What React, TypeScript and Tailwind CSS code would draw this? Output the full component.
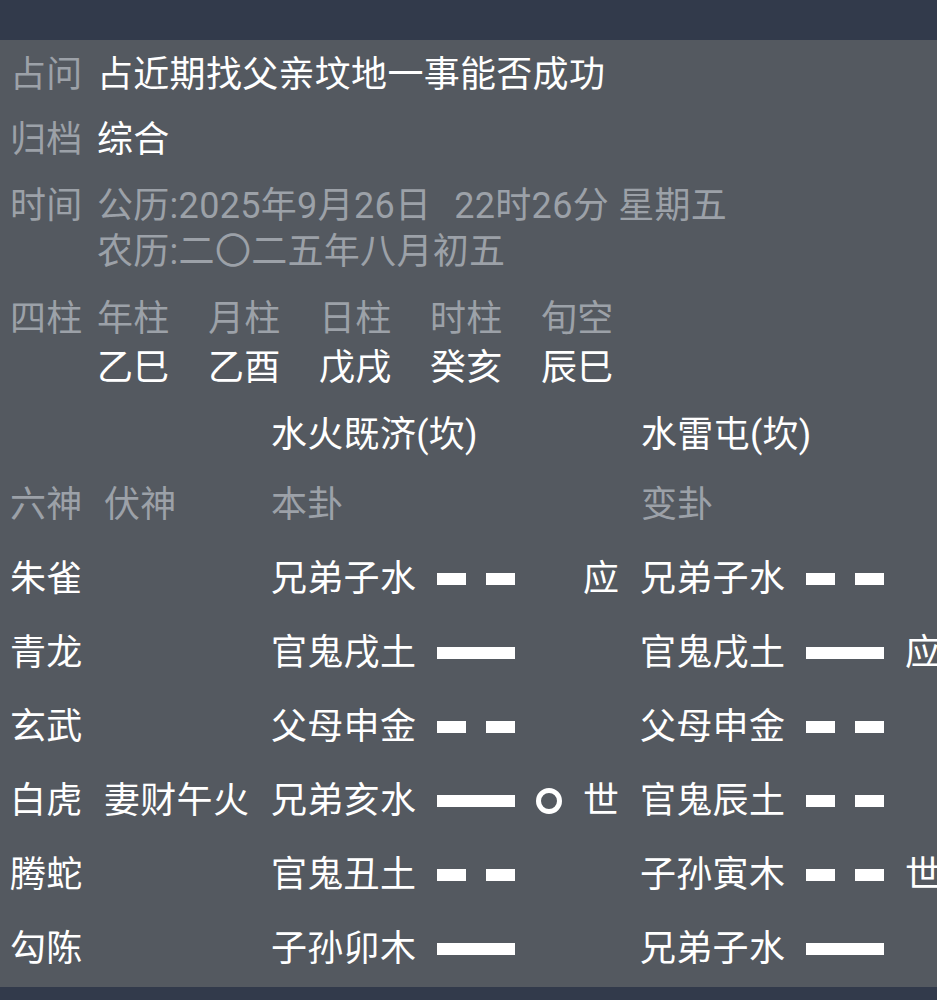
import React from "react";

const FONT = { fontFamily: 'Roboto, "Noto Sans CJK SC", sans-serif' };

function Solid() {
  return <div className="h-[12px] w-[78px] bg-white" />;
}

function Broken() {
  return (
    <div className="flex w-[78px] justify-between">
      <div className="h-[12px] w-[29px] bg-white" />
      <div className="h-[12px] w-[29px] bg-white" />
    </div>
  );
}

type Yao = {
  god: string;
  fu: string;
  ben: string;
  benLine: "s" | "b";
  moving: boolean;
  benMark: string;
  bian: string;
  bianLine: "s" | "b";
  bianMark: string;
};

const rows: Yao[] = [
  { god: "朱雀", fu: "", ben: "兄弟子水", benLine: "b", moving: false, benMark: "应", bian: "兄弟子水", bianLine: "b", bianMark: "" },
  { god: "青龙", fu: "", ben: "官鬼戌土", benLine: "s", moving: false, benMark: "", bian: "官鬼戌土", bianLine: "s", bianMark: "应" },
  { god: "玄武", fu: "", ben: "父母申金", benLine: "b", moving: false, benMark: "", bian: "父母申金", bianLine: "b", bianMark: "" },
  { god: "白虎", fu: "妻财午火", ben: "兄弟亥水", benLine: "s", moving: true, benMark: "世", bian: "官鬼辰土", bianLine: "b", bianMark: "" },
  { god: "腾蛇", fu: "", ben: "官鬼丑土", benLine: "b", moving: false, benMark: "", bian: "子孙寅木", bianLine: "b", bianMark: "世" },
  { god: "勾陈", fu: "", ben: "子孙卯木", benLine: "s", moving: false, benMark: "", bian: "兄弟子水", bianLine: "s", bianMark: "" },
];

const pillars = [
  ["年柱", "乙巳"],
  ["月柱", "乙酉"],
  ["日柱", "戊戌"],
  ["时柱", "癸亥"],
  ["旬空", "辰巳"],
];

export default function App() {
  return (
    <div
      className="flex h-[1000px] w-[937px] flex-col overflow-hidden bg-[#545960] text-[36px] leading-[46px] tracking-[0.3px] text-white"
      style={FONT}
    >
      <div className="h-[40px] shrink-0 bg-[#323a4b]" />
      <div className="flex flex-1 flex-col pl-[10px] pt-[12px]">
        <div className="flex">
          <div className="w-[87px] text-[#9ca1a8]">占问</div>
          <div>占近期找父亲坟地一事能否成功</div>
        </div>
        <div className="mt-[19px] flex">
          <div className="w-[87px] text-[#9ca1a8]">归档</div>
          <div>综合</div>
        </div>
        <div className="mt-[20px] flex text-[#9ca1a8]">
          <div className="w-[87px]">时间</div>
          <div className="flex flex-col">
            <div className="flex whitespace-pre">
              <span>公历:2025年9月26日</span>
              <span className="ml-[23px]">22时26分 星期五</span>
            </div>
            <div>农历:二〇二五年八月初五</div>
          </div>
        </div>
        <div className="mt-[21px] flex">
          <div className="w-[87px] text-[#9ca1a8]">四柱</div>
          <div className="flex">
            {pillars.map(([a, b]) => (
              <div key={a} className="flex w-[111px] flex-col">
                <div className="text-[#9ca1a8]">{a}</div>
                <div className="mt-[3px]">{b}</div>
              </div>
            ))}
          </div>
        </div>
        <div className="mt-[21px] flex">
          <div className="w-[631px] pl-[261px]">水火既济(坎)</div>
          <div>水雷屯(坎)</div>
        </div>
        <div className="mt-[24px] flex text-[#9ca1a8]">
          <div className="w-[94px]">六神</div>
          <div className="w-[167px]">伏神</div>
          <div className="w-[370px]">本卦</div>
          <div>变卦</div>
        </div>
        <div className="mt-[14px] flex flex-col">
          {rows.map((r) => (
            <div key={r.god} className="flex h-[74px] items-center whitespace-nowrap">
              <div className="w-[94px] shrink-0">{r.god}</div>
              <div className="w-[167px] shrink-0">{r.fu}</div>
              <div className="w-[144px] shrink-0">{r.ben}</div>
              <div className="ml-[22px] shrink-0">{r.benLine === "s" ? <Solid /> : <Broken />}</div>
              <div className="flex w-[68px] shrink-0 items-center justify-center">
                {r.moving && (
                  <div className="h-[26px] w-[26px] rounded-full border-[5px] border-white" />
                )}
              </div>
              <div className="w-[36px] shrink-0">{r.benMark}</div>
              <div className="ml-[21px] w-[144px] shrink-0">{r.bian}</div>
              <div className="ml-[22px] shrink-0">{r.bianLine === "s" ? <Solid /> : <Broken />}</div>
              <div className="ml-[21px] w-[36px] shrink-0">{r.bianMark}</div>
            </div>
          ))}
        </div>
      </div>
      <div className="h-[13px] shrink-0 bg-[#323a4b]" />
    </div>
  );
}
